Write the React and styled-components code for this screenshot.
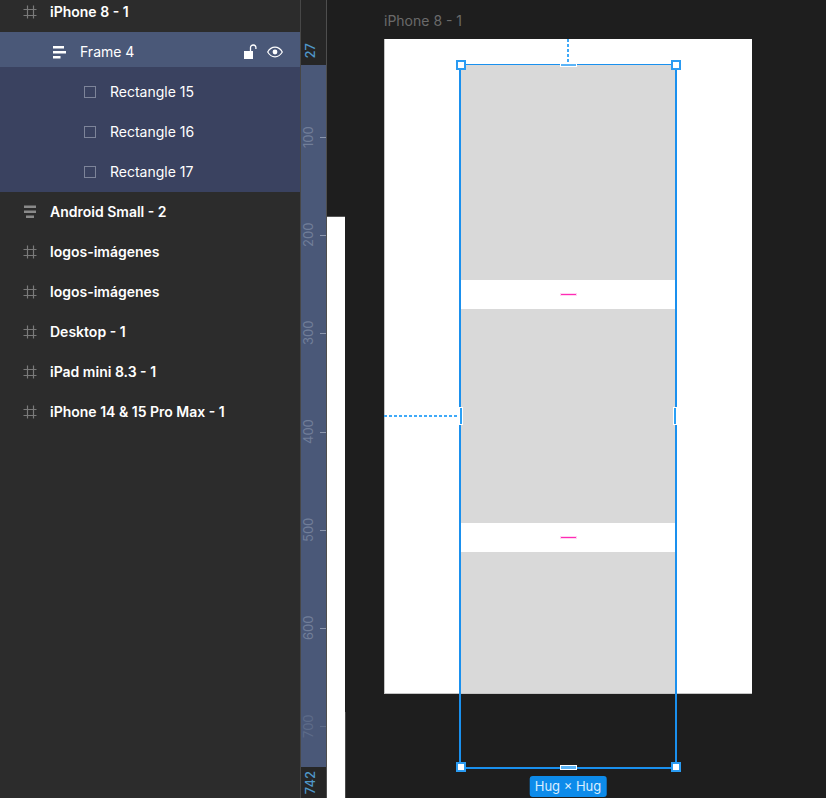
import React from 'react'
import styled, { createGlobalStyle } from 'styled-components'

const GlobalStyle = createGlobalStyle`
  html, body {
    margin: 0;
    background: #1e1e1e;
  }
`

const HashIcon = () => (
  <svg width='14' height='14' viewBox='0 0 14 14' fill='none' stroke='#7a7a7a' strokeWidth='1.2'>
    <path d='M4.5 0.5V13.5M10.5 0.5V13.5M0.5 4.5H13.5M0.5 10.5H13.5' />
  </svg>
)

const BarsIcon = () => (
  <svg width='14' height='14' viewBox='0 0 14 14' fill='#8a8a8a'>
    <rect x='1' y='0.5' width='12' height='2.5' />
    <rect x='1' y='5.5' width='12' height='2.5' />
    <rect x='3' y='10.5' width='8' height='2.5' />
  </svg>
)

const LeftBarsIcon = () => (
  <svg width='14' height='14' viewBox='0 0 14 14' fill='#ffffff'>
    <rect x='0' y='0' width='11' height='2.5' />
    <rect x='0' y='5' width='13' height='2.5' />
    <rect x='0' y='10' width='7.5' height='2.5' />
  </svg>
)

const RectIcon = () => (
  <svg width='12' height='12' viewBox='0 0 12 12' fill='none' stroke='#7d8499'>
    <rect x='0.5' y='0.5' width='11' height='11' />
  </svg>
)

const LockIcon = () => (
  <svg width='14' height='16' viewBox='0 0 14 16' fill='none'>
    <rect x='0' y='7' width='9' height='8' fill='#ffffff' />
    <path d='M6.5 7V3.6C6.5 2 7.7 1 9.2 1C10.7 1 11.9 2 11.9 3.6V5' stroke='#ffffff' strokeWidth='1.3' />
  </svg>
)

const EyeIcon = () => (
  <svg width='16' height='12' viewBox='0 0 16 12' fill='none' stroke='#ffffff'>
    <path d='M0.7 6C2.5 2.9 5 1.2 8 1.2C11 1.2 13.5 2.9 15.3 6C13.5 9.1 11 10.8 8 10.8C5 10.8 2.5 9.1 0.7 6Z' strokeWidth='1.2' />
    <circle cx='8' cy='6' r='2.4' fill='#ffffff' stroke='none' />
  </svg>
)

const layers = [
  { name: 'Android Small - 2', icon: <BarsIcon /> },
  { name: 'logos-imágenes', icon: <HashIcon /> },
  { name: 'logos-imágenes', icon: <HashIcon /> },
  { name: 'Desktop - 1', icon: <HashIcon /> },
  { name: 'iPad mini 8.3 - 1', icon: <HashIcon /> },
  { name: 'iPhone 14 & 15 Pro Max - 1', icon: <HashIcon /> },
]

const children = ['Rectangle 15', 'Rectangle 16', 'Rectangle 17']
const ticks = ['100', '200', '300', '400', '500', '600', '700']

const App = () => {
  return (
    <Wrapper>
      <GlobalStyle />
      <Sidebar>
        <Row>
          <IconSlot><HashIcon /></IconSlot>
          <LayerName>iPhone 8 - 1</LayerName>
        </Row>
        <Group>
          <GroupHeader>
            <HeaderIcon><LeftBarsIcon /></HeaderIcon>
            <ChildName>Frame 4</ChildName>
            <HeaderActions>
              <LockIcon />
              <EyeIcon />
            </HeaderActions>
          </GroupHeader>
          {children.map((name) => (
            <ChildRow key={name}>
              <RectIcon />
              <ChildName>{name}</ChildName>
            </ChildRow>
          ))}
        </Group>
        {layers.map((layer, i) => (
          <Row key={i}>
            <IconSlot>{layer.icon}</IconSlot>
            <LayerName>{layer.name}</LayerName>
          </Row>
        ))}
      </Sidebar>

      <Ruler>
        <RulerCap>
          <CapLabel>27</CapLabel>
        </RulerCap>
        <RulerBand>
          {ticks.map((t) => (
            <Tick key={t}>
              <TickLabel $dim={t === '700'}>{t}</TickLabel>
              <TickMark $dim={t === '700'} />
            </Tick>
          ))}
        </RulerBand>
        <RulerCapBottom>
          <CapLabel>742</CapLabel>
        </RulerCapBottom>
      </Ruler>

      <Canvas>
        <SideFrame />
        <FaintEdge />
        <FrameTitle>iPhone 8 - 1</FrameTitle>
        <Frame>
          <Stack>
            <GrayRect />
            <GapMark />
            <GrayRect />
            <GapMark />
            <GrayRect />
          </Stack>
        </Frame>
        <DashV />
        <DashH />
        <Selection>
          <Corner $top $left />
          <Corner $top />
          <Corner $left />
          <Corner />
          <EdgeH $top />
          <EdgeH />
          <EdgeV $left />
          <EdgeV />
          <SizeBadge>Hug × Hug</SizeBadge>
        </Selection>
      </Canvas>
    </Wrapper>
  )
}

const Wrapper = styled.div`
  display: flex;
  width: 826px;
  height: 798px;
  overflow: hidden;
  background: #1e1e1e;
  font-family: Inter, 'Liberation Sans', sans-serif;
`

const Sidebar = styled.aside`
  width: 300px;
  flex-shrink: 0;
  margin-top: -8px;
  background: #2c2c2c;
`

const Row = styled.div`
  display: flex;
  align-items: center;
  height: 40px;
  padding-left: 23px;
`

const IconSlot = styled.span`
  display: flex;
  width: 27px;
`

const LayerName = styled.span`
  margin-bottom: 2px;
  color: #ffffff;
  font-size: 14px;
  font-weight: 600;
`

const Group = styled.div`
  background: #3a4260;
`

const GroupHeader = styled.div`
  display: flex;
  align-items: center;
  height: 30px;
  padding: 5px 17px 0 53px;
  margin-bottom: 5px;
  background: #4a5878;
`

const HeaderIcon = styled.span`
  display: flex;
  width: 27px;
  height: 12px;
  svg {
    display: block;
  }
`

const ChildName = styled.span`
  margin-bottom: 2px;
  color: #ffffff;
  font-size: 14px;
  font-weight: 400;
`

const HeaderActions = styled.span`
  display: flex;
  align-items: center;
  gap: 9px;
  margin-left: auto;
`

const ChildRow = styled.div`
  display: flex;
  align-items: center;
  gap: 14px;
  height: 40px;
  padding-left: 84px;
`

const Ruler = styled.div`
  display: flex;
  flex-direction: column;
  width: 25px;
  flex-shrink: 0;
  background: #262626;
  border-left: 1px solid #474747;
  border-right: 1px solid #4e4e4e;
`

const RulerCap = styled.div`
  display: flex;
  align-items: flex-end;
  height: 65px;
  padding: 0 0 7px 3px;
  box-sizing: border-box;
`

const RulerCapBottom = styled.div`
  display: flex;
  flex: 1;
  align-items: center;
  padding-left: 3px;
`

const CapLabel = styled.span`
  writing-mode: vertical-rl;
  transform: rotate(180deg);
  line-height: 13px;
  color: #4f97c9;
  font-size: 13px;
  font-weight: 500;
`

const RulerBand = styled.div`
  height: 702px;
  padding-top: 72px;
  box-sizing: border-box;
  background: #4a5878;
`

const Tick = styled.div`
  display: flex;
  justify-content: flex-end;
  height: 98.2px;
`

const TickLabel = styled.span`
  height: 28px;
  margin: -14px 5px 0 0;
  writing-mode: vertical-rl;
  transform: rotate(180deg);
  text-align: center;
  line-height: 13px;
  color: ${(p) => (p.$dim ? '#5d6b88' : '#717e98')};
  font-size: 13px;
`

const TickMark = styled.i`
  display: block;
  width: 6px;
  height: 1px;
  background: ${(p) => (p.$dim ? '#5d6b88' : '#8b96ad')};
`

const Canvas = styled.main`
  position: relative;
  flex: 1;
`

const SideFrame = styled.div`
  position: absolute;
  left: 0;
  top: 217px;
  bottom: 0;
  width: 18px;
  background: #ffffff;
  box-shadow: 0 -1px 0 #555555;
`

const FaintEdge = styled.div`
  position: absolute;
  left: 18px;
  top: 712px;
  bottom: 0;
  width: 1px;
  background: #4a4a4a;
`

const FrameTitle = styled.div`
  position: absolute;
  left: 57px;
  top: 12px;
  color: #6a6a6a;
  font-size: 14px;
`

const Frame = styled.div`
  position: absolute;
  left: 57px;
  top: 39px;
  width: 368px;
  height: 655px;
  padding: 26.4px 0 0 76px;
  box-sizing: border-box;
  overflow: hidden;
  background: #ffffff;
  &::after {
    content: '';
    position: absolute;
    inset: 0;
    box-shadow: inset 1px -1px 0 #c4c4c4;
  }
`

const Stack = styled.div`
  width: 216px;
`

const GrayRect = styled.div`
  height: 214.6px;
  background: #d9d9d9;
`

const GapMark = styled.div`
  display: flex;
  align-items: center;
  justify-content: center;
  height: 28.8px;
  &::after {
    content: '';
    width: 15px;
    height: 1px;
    background: #ff2cb4;
    box-shadow: 0 0 0 1px rgba(255, 150, 220, 0.4);
  }
`

const DashV = styled.div`
  position: absolute;
  left: 240px;
  top: 39px;
  width: 2px;
  height: 24px;
  background: repeating-linear-gradient(to bottom, #3fa9f8 0 3px, transparent 3px 5px);
`

const DashH = styled.div`
  position: absolute;
  left: 57px;
  top: 415px;
  width: 75px;
  height: 2px;
  background: repeating-linear-gradient(to right, #3fa9f8 0 3px, transparent 3px 5px);
`

const Selection = styled.div`
  position: absolute;
  left: 132px;
  top: 64px;
  width: 218px;
  height: 705px;
  box-sizing: border-box;
  border-style: solid;
  border-color: #1a90ee;
  border-width: 1px 2px 2px;
`

const Corner = styled.span`
  position: absolute;
  ${(p) => (p.$top ? 'top: -5px;' : 'bottom: -5px;')}
  ${(p) => (p.$left ? 'left: -5px;' : 'right: -6px;')}
  width: 10px;
  height: 10px;
  box-sizing: border-box;
  background: #ffffff;
  border: 2px solid #2a9bf2;
`

const EdgeH = styled.span`
  position: absolute;
  left: 99px;
  ${(p) => (p.$top ? 'top: -2px;' : 'bottom: -3px;')}
  width: 17px;
  height: ${(p) => (p.$top ? 4 : 5)}px;
  box-sizing: border-box;
  background: #5bb4f7;
  border: 1px solid #ffffff;
`

const EdgeV = styled.span`
  position: absolute;
  top: 342px;
  ${(p) => (p.$left ? 'left: -2px;' : 'right: -2px;')}
  width: 4px;
  height: 18px;
  box-sizing: border-box;
  background: #2aa0f5;
  border: 1px solid #ffffff;
`

const SizeBadge = styled.div`
  position: absolute;
  left: 50%;
  bottom: -30px;
  transform: translateX(-50%);
  padding: 0 5px;
  height: 21px;
  line-height: 21px;
  white-space: nowrap;
  border-radius: 3px;
  background: #0d8bea;
  color: #d9eeff;
  font-size: 13px;
`

export default App
